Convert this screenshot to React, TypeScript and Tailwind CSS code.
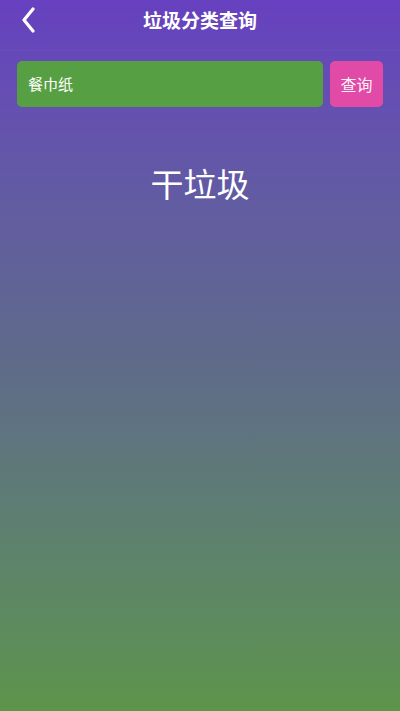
export default function App() {
  return (
    <div
      className="h-[711px] w-[400px] bg-gradient-to-b from-[#6740c0] via-[#5f6a8a] to-[#5d944a] flex flex-col"
      style={{ fontFamily: '"Noto Sans CJK SC", "Noto Sans", sans-serif' }}
    >
      <header className="h-[51px] shrink-0 relative flex items-center justify-center border-b border-white/[0.03]">
        <button className="absolute left-[20px] top-[7px] w-[16px] h-[26px] flex items-center justify-center">
          <svg width="14" height="26" viewBox="0 0 14 26" fill="none">
            <path d="M12 2 L3 13 L12 24" stroke="white" strokeWidth="3.2" strokeLinecap="round" strokeLinejoin="round" />
          </svg>
        </button>
        <h1 className="text-white text-[19px] font-bold leading-none -mt-[11px]">垃圾分类查询</h1>
      </header>

      <div className="flex gap-[7px] pl-[17px] pr-[17px] mt-[10px]">
        <div className="flex-1 h-[46px] rounded-[5px] bg-[#56a043] flex items-center px-[11px]">
          <span className="text-white text-[15px]">餐巾纸</span>
        </div>
        <button className="w-[53px] h-[46px] rounded-[5px] bg-[#e24aa8] text-white/95 text-[16px]">查询</button>
      </div>

      <p className="mt-[60px] text-center text-white text-[33px] leading-none">干垃圾</p>
    </div>
  );
}
